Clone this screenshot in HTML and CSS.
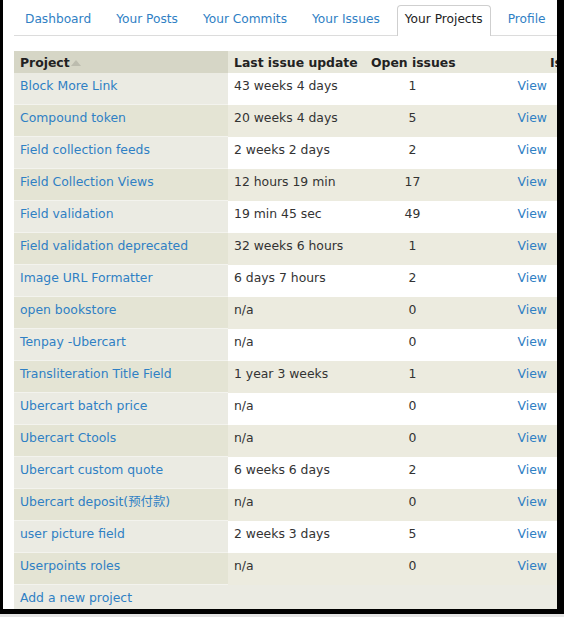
FILE: index.html
```html
<!DOCTYPE html>
<html lang="en">
<head>
  <meta charset="UTF-8">
  <title>Your Projects</title>
  <link rel="stylesheet" href="styles.css">
</head>
<body>
  <div class="frame">
    <div class="page">
      <ul class="tabs">
        <li><a href="#">Dashboard</a></li>
        <li><a href="#">Your Posts</a></li>
        <li><a href="#">Your Commits</a></li>
        <li><a href="#">Your Issues</a></li>
        <li class="active"><a href="#">Your Projects</a></li>
        <li><a href="#">Profile</a></li>
      </ul>

      <table class="projects">
        <colgroup>
          <col class="c-project">
          <col class="c-update">
          <col class="c-open">
          <col class="c-view">
          <col class="c-rest">
        </colgroup>
        <thead>
          <tr>
            <th class="sorted">Project<svg class="arrow" width="10" height="6" viewBox="0 0 10 6"><path d="M0 6 L5 0 L10 6 Z" fill="#bcbcae"/></svg></th>
            <th>Last issue update</th>
            <th>Open issues</th>
            <th></th>
            <th class="issues">Issues</th>
          </tr>
        </thead>
        <tbody>
          <tr class="odd"><td class="name"><a href="#">Block More Link</a></td><td>43 weeks 4 days</td><td class="num">1</td><td class="view"><a href="#">View</a></td><td></td></tr>
          <tr class="even"><td class="name"><a href="#">Compound token</a></td><td>20 weeks 4 days</td><td class="num">5</td><td class="view"><a href="#">View</a></td><td></td></tr>
          <tr class="odd"><td class="name"><a href="#">Field collection feeds</a></td><td>2 weeks 2 days</td><td class="num">2</td><td class="view"><a href="#">View</a></td><td></td></tr>
          <tr class="even"><td class="name"><a href="#">Field Collection Views</a></td><td>12 hours 19 min</td><td class="num">17</td><td class="view"><a href="#">View</a></td><td></td></tr>
          <tr class="odd"><td class="name"><a href="#">Field validation</a></td><td>19 min 45 sec</td><td class="num">49</td><td class="view"><a href="#">View</a></td><td></td></tr>
          <tr class="even"><td class="name"><a href="#">Field validation deprecated</a></td><td>32 weeks 6 hours</td><td class="num">1</td><td class="view"><a href="#">View</a></td><td></td></tr>
          <tr class="odd"><td class="name"><a href="#">Image URL Formatter</a></td><td>6 days 7 hours</td><td class="num">2</td><td class="view"><a href="#">View</a></td><td></td></tr>
          <tr class="even"><td class="name"><a href="#">open bookstore</a></td><td>n/a</td><td class="num">0</td><td class="view"><a href="#">View</a></td><td></td></tr>
          <tr class="odd"><td class="name"><a href="#">Tenpay -Ubercart</a></td><td>n/a</td><td class="num">0</td><td class="view"><a href="#">View</a></td><td></td></tr>
          <tr class="even"><td class="name"><a href="#">Transliteration Title Field</a></td><td>1 year 3 weeks</td><td class="num">1</td><td class="view"><a href="#">View</a></td><td></td></tr>
          <tr class="odd"><td class="name"><a href="#">Ubercart batch price</a></td><td>n/a</td><td class="num">0</td><td class="view"><a href="#">View</a></td><td></td></tr>
          <tr class="even"><td class="name"><a href="#">Ubercart Ctools</a></td><td>n/a</td><td class="num">0</td><td class="view"><a href="#">View</a></td><td></td></tr>
          <tr class="odd"><td class="name"><a href="#">Ubercart custom quote</a></td><td>6 weeks 6 days</td><td class="num">2</td><td class="view"><a href="#">View</a></td><td></td></tr>
          <tr class="even"><td class="name"><a href="#">Ubercart deposit(预付款)</a></td><td>n/a</td><td class="num">0</td><td class="view"><a href="#">View</a></td><td></td></tr>
          <tr class="odd"><td class="name"><a href="#">user picture field</a></td><td>2 weeks 3 days</td><td class="num">5</td><td class="view"><a href="#">View</a></td><td></td></tr>
          <tr class="even"><td class="name"><a href="#">Userpoints roles</a></td><td>n/a</td><td class="num">0</td><td class="view"><a href="#">View</a></td><td></td></tr>
          <tr class="add"><td colspan="5"><a href="#">Add a new project</a></td></tr>
        </tbody>
      </table>
    </div>
  </div>
</body>
</html>
```

FILE: styles.css
```css
body {
  margin: 0;
  padding: 0;
  background-color: #e4e4e4;
  font-family: "DejaVu Sans", Verdana, "Noto Sans CJK SC", sans-serif;
  font-size: 12px;
  color: #333;
}

.frame {
  background-color: #000;
  width: 554px;
  padding: 0 7px 5px 3px;
}

.page {
  background-color: #fff;
  width: 554px;
  height: 609px;
  overflow: hidden;
}

a {
  color: #2f80c4;
  text-decoration: none;
}

.tabs {
  list-style: none;
  margin: 0 0 0 11px;
  padding: 5px 0 0 3px;
  display: flex;
  gap: 9px;
  border-bottom: 1px solid #dcdcdc;
  line-height: 16px;
  font-size: 12.2px;
}

.tabs li {
  padding: 5px 7px 8px;
  border: 1px solid transparent;
  border-bottom: none;
  margin-bottom: -1px;
  border-radius: 4px 4px 0 0;
}

.tabs li.active {
  border-color: #cfcfcf;
  background-color: #fff;
  padding-bottom: 9px;
}

.tabs li.active a {
  color: #222;
}

.projects {
  margin: 15px 0 0 11px;
  border-collapse: collapse;
  table-layout: fixed;
  width: 700px;
  line-height: 16px;
  font-size: 12.4px;
}

.c-project { width: 214px; }
.c-update { width: 137px; }
.c-open { width: 95px; }
.c-view { width: 90px; }
.c-rest { width: 164px; }

.projects th {
  background-color: #e8e8dc;
  color: #222;
  text-align: left;
  padding: 4px 6px 2px;
  white-space: nowrap;
}

.projects th.sorted {
  background-color: #d6d6c6;
}

.projects th.issues {
  padding-left: 0;
}

.arrow {
  margin-left: 1px;
  vertical-align: 1px;
}

.projects td {
  padding: 5px 6px 10px;
  white-space: nowrap;
  border-bottom: 1px solid #f2f2ec;
}

.projects tr.odd td {
  background-color: #fff;
  border-bottom-color: #fff;
}

.projects tr.even td {
  background-color: #ecebdf;
  border-bottom-color: #ecebdf;
}

.projects tr.odd td.name {
  background-color: #ebebe3;
  border-bottom-color: #f3f3ee;
}

.projects tr.even td.name {
  background-color: #e4e4d4;
  border-bottom-color: #f3f3ee;
}

.projects td.num {
  text-align: center;
}

.projects td.view {
  text-align: right;
  padding-right: 3px;
}

.projects tr.add td {
  background-color: #ebebe3;
  padding: 5px 6px 3px;
  border-bottom: none;
}
```
